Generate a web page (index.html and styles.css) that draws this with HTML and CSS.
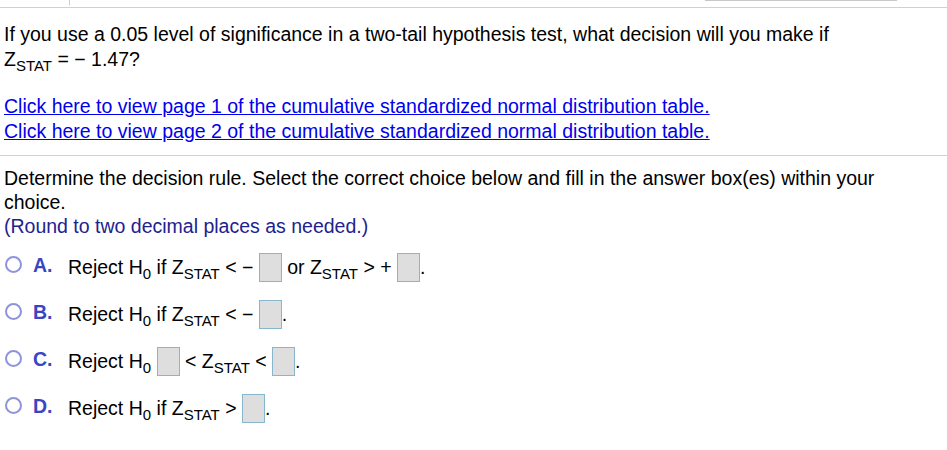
FILE: index.html
```html
<!DOCTYPE html>
<html>
<head>
<meta charset="utf-8">
<link rel="stylesheet" href="styles.css">
</head>
<body>
<div class="topbar">
  <span class="tick"></span>
  <span class="tab"></span>
</div>
<div class="question">
  <p class="q">If you use a 0.05 level of significance in a two-tail hypothesis test, what decision will you make if<br>Z<sub>STAT</sub> = &minus; 1.47?</p>
  <div class="links">
    <a href="#">Click here to view page 1 of the cumulative standardized normal distribution table.</a><br>
    <a href="#">Click here to view page 2 of the cumulative standardized normal distribution table.</a>
  </div>
</div>
<div class="answer">
  <p class="prompt">Determine the decision rule. Select the correct choice below and fill in the answer box(es) within your choice.</p>
  <p class="note">(Round to two decimal places as needed.)</p>
  <ul class="choices">
    <li class="choice"><span class="radio"></span><span class="letter">A.</span><span class="body">Reject H<sub>0</sub> if Z<sub>STAT</sub> &lt; &minus; <span class="box"></span> or Z<sub>STAT</sub> &gt; + <span class="box"></span>.</span></li>
    <li class="choice"><span class="radio"></span><span class="letter">B.</span><span class="body">Reject H<sub>0</sub> if Z<sub>STAT</sub> &lt; &minus; <span class="box"></span>.</span></li>
    <li class="choice"><span class="radio"></span><span class="letter">C.</span><span class="body">Reject H<sub>0</sub> <span class="box"></span> &lt; Z<sub>STAT</sub> &lt; <span class="box"></span>.</span></li>
    <li class="choice"><span class="radio"></span><span class="letter">D.</span><span class="body">Reject H<sub>0</sub> if Z<sub>STAT</sub> &gt; <span class="box"></span>.</span></li>
  </ul>
</div>
</body>
</html>
```
FILE: styles.css
```css
html, body {
  margin: 0;
  padding: 0;
  background: #fff;
}
body {
  font-family: "Liberation Sans", Arial, sans-serif;
  font-size: 19.5px;
  color: #000;
}
.topbar {
  position: relative;
  height: 7px;
  border-bottom: 1px solid #cfd0da;
}
.tick {
  position: absolute;
  left: 69px;
  top: 0;
  width: 1px;
  height: 5px;
  background: #c8cad6;
}
.tab {
  position: absolute;
  left: 705px;
  top: 0;
  width: 192px;
  height: 1px;
  background: #c8c8c8;
}
.question {
  padding: 14px 4px 11px 4px;
  border-bottom: 1px solid #cfd0da;
}
.q {
  margin: 0;
  line-height: 25px;
}
sub {
  font-size: 15px;
  vertical-align: -5px;
  line-height: 0;
}
.links {
  margin-top: 22px;
  line-height: 25px;
}
.links a {
  color: #0000ee;
  text-decoration: underline;
}
.answer {
  padding: 10px 4px 0 4px;
}
.prompt {
  margin: 0;
  line-height: 24px;
  max-width: 900px;
}
.note {
  margin: 0;
  line-height: 24px;
  color: #22228f;
}
.choices {
  list-style: none;
  margin: 6px 0 0 0;
  padding: 0;
}
.choice {
  display: flex;
  align-items: center;
  height: 47px;
  line-height: 24px;
}
.radio {
  width: 17px;
  height: 17px;
  border: 2px solid #8f93dc;
  border-radius: 50%;
  box-sizing: border-box;
  margin-left: 1px;
  margin-top: -6px;
}
.letter {
  font-weight: bold;
  color: #3a45c4;
  margin-left: 11px;
  width: 35px;
  margin-top: -6px;
}
.body {
  white-space: nowrap;
}
.box {
  display: inline-block;
  width: 21px;
  height: 27px;
  background: #dedede;
  border: 1px solid #86b7cf;
  vertical-align: -8px;
}
```
